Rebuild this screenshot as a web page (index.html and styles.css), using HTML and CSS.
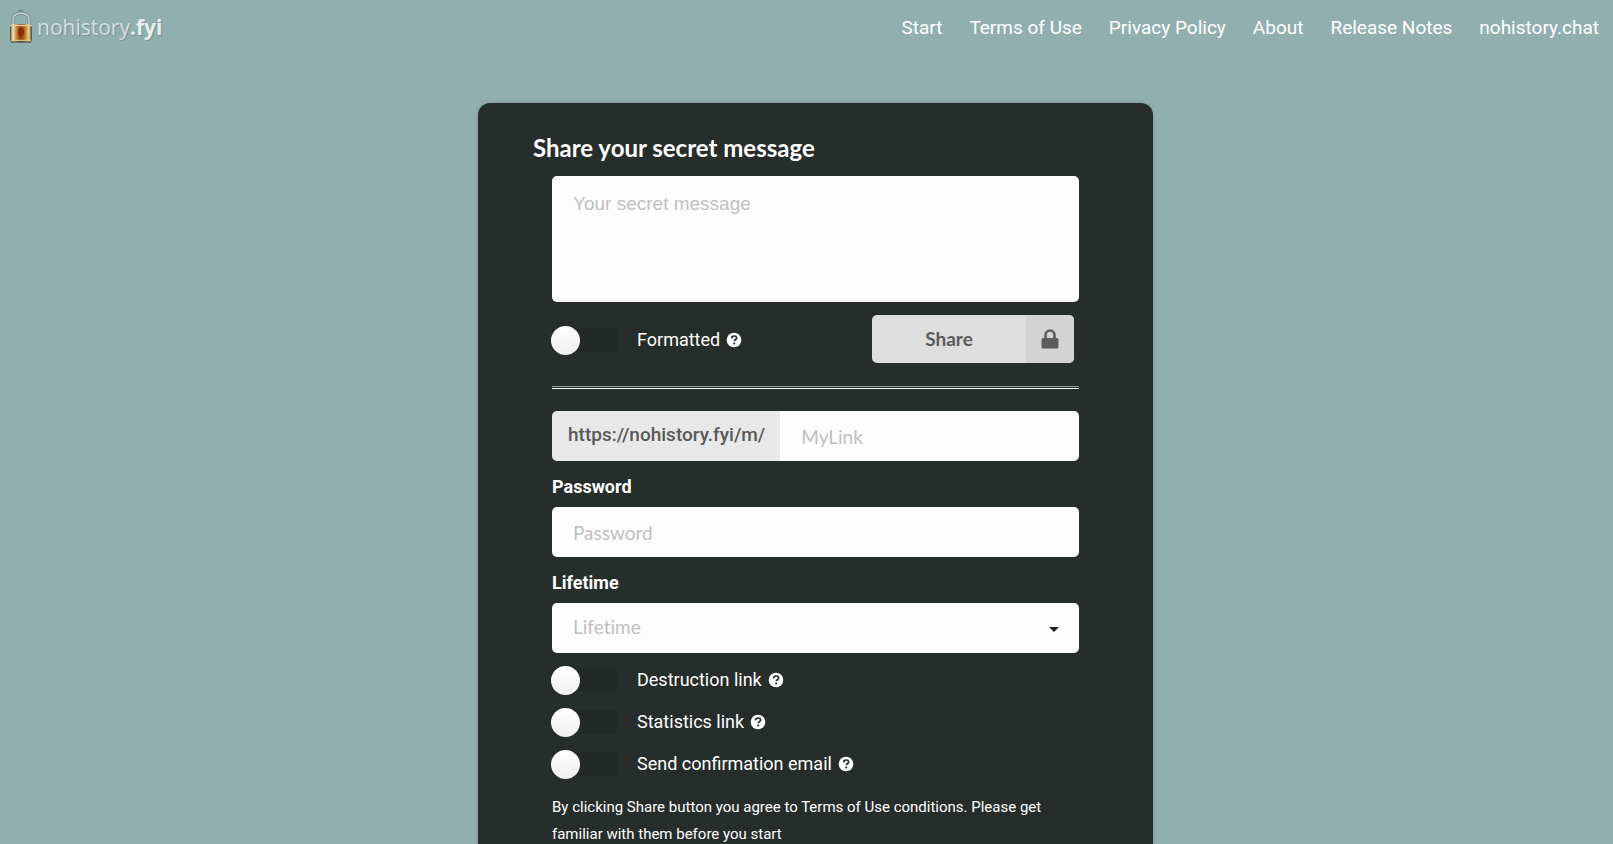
FILE: index.html
```html
<!DOCTYPE html>
<html lang="en">
<head>
<meta charset="utf-8">
<meta name="viewport" content="width=device-width, initial-scale=1">
<title>nohistory.fyi</title>
<link rel="stylesheet" href="styles.css">
</head>
<body>
<svg class="defs" width="0" height="0" aria-hidden="true">
  <symbol id="help" viewBox="0 0 16 16">
    <circle cx="8" cy="8" r="7.3" fill="#fff"/>
    <path d="M5.5 6.3C5.7 4.7 6.7 4 8.1 4c1.500 0 2.500.8 2.500 2.100 0 1.700-2.300 1.700-2.300 3.100" fill="none" stroke="#262d2b" stroke-width="1.700"/>
    <circle cx="8.200" cy="11.500" r="1.100" fill="#262d2b"/>
  </symbol>
</svg>
<header class="topbar">
  <a class="brand" href="#">
    <svg class="brand-icon" viewBox="0 0 26 36" aria-hidden="true">
      <defs>
        <linearGradient id="brass" x1="0" x2="1" y1="0" y2="0">
          <stop offset="0" stop-color="#3e3d22"/>
          <stop offset=".13" stop-color="#f3ecc2"/>
          <stop offset=".28" stop-color="#c58b43"/>
          <stop offset=".48" stop-color="#8d3808"/>
          <stop offset=".66" stop-color="#b06820"/>
          <stop offset=".85" stop-color="#ead590"/>
          <stop offset="1" stop-color="#4f441e"/>
        </linearGradient>
      </defs>
      <path d="M5 16V8C5 5 8 4 13 3c5 1 8 2 8 5v8" fill="none" stroke="#6b8287" stroke-width="3"/>
      <path d="M5 16V8C5 5 8 4 13 3c5 1 8 2 8 5v8" fill="none" stroke="#c8dadb" stroke-width="1.400"/>
      <path d="M10 .8h5" stroke="#6b8285" stroke-width="1.500"/>
      <rect x="2" y="14" width="22" height="18" rx="2" fill="url(#brass)"/>
      <path d="M2 15.500h22" stroke="#d8cfa5" stroke-width="1.500"/>
      <path d="M3 30.500h20" stroke="#d9c583" stroke-width="1.500"/>
      <ellipse cx="13" cy="22" rx="3" ry="4" fill="#8a2a06"/>
      <path d="M3 32h20" stroke="#30373a" stroke-width="1"/>
    </svg>
    <span class="brand-name">nohistory<b>.fyi</b></span>
  </a>
  <nav class="nav">
    <a href="#">Start</a>
    <a href="#">Terms of Use</a>
    <a href="#">Privacy Policy</a>
    <a href="#">About</a>
    <a href="#">Release Notes</a>
    <a href="#">nohistory.chat</a>
  </nav>
</header>
<main class="page">
  <section class="card">
    <h1 class="title">Share your secret message</h1>
    <form class="form">
      <textarea class="box message" placeholder="Your secret message" aria-label="Your secret message"></textarea>
      <div class="actions">
        <div class="toggle">
          <input class="switch" type="checkbox" id="formatted">
          <label for="formatted">Formatted</label>
          <svg class="help"><use href="#help"/></svg>
        </div>
        <button class="share" type="button">
          <span class="share-text">Share</span>
          <span class="share-icon">
            <svg viewBox="0 0 18 20" width="18" height="20" aria-hidden="true">
              <path d="M4.500 10V6a4.500 4.500 0 0 1 9 0v4" fill="none" stroke="#5c5c5c" stroke-width="2.600"/>
              <rect x="0.500" y="9" width="17" height="10.500" rx="1.500" fill="#5c5c5c"/>
            </svg>
          </span>
        </button>
      </div>
      <hr class="divider">
      <div class="link-field">
        <label class="prefix" for="link">https://nohistory.fyi/m/</label>
        <input class="box link" id="link" type="text" placeholder="MyLink">
      </div>
      <label class="label" for="password">Password</label>
      <input class="box" id="password" type="password" placeholder="Password">
      <label class="label" for="lifetime">Lifetime</label>
      <div class="select-wrap">
        <select class="box select" id="lifetime"><option value="">Lifetime</option></select>
        <svg class="caret" viewBox="0 0 10 5" aria-hidden="true"><path d="M0 0h10L5 5z" fill="#222"/></svg>
      </div>
      <div class="options">
        <div class="toggle">
          <input class="switch" type="checkbox" id="destruction">
          <label for="destruction">Destruction link</label>
          <svg class="help"><use href="#help"/></svg>
        </div>
        <div class="toggle">
          <input class="switch" type="checkbox" id="statistics">
          <label for="statistics">Statistics link</label>
          <svg class="help"><use href="#help"/></svg>
        </div>
        <div class="toggle">
          <input class="switch" type="checkbox" id="confirmation">
          <label for="confirmation">Send confirmation email</label>
          <svg class="help"><use href="#help"/></svg>
        </div>
      </div>
      <p class="note">By clicking Share button you agree to Terms of Use conditions. Please get familiar with them before you start</p>
    </form>
  </section>
</main>
</body>
</html>
```

FILE: styles.css
```css
* { box-sizing: border-box; }

body {
  margin: 0;
  background: #91afaf;
  color: #fff;
  font-family: Roboto, "Liberation Sans", sans-serif;
  font-size: 18px;
}

.defs { position: absolute; }

.topbar {
  display: flex;
  justify-content: space-between;
  align-items: center;
  height: 55px;
  padding: 0 14px 0 8px;
}

.brand {
  display: flex;
  align-items: center;
  gap: 3px;
  color: #e3eeee;
  text-decoration: none;
}

.brand-icon { width: 26px; height: 36px; }

.brand-name {
  font-family: "Open Sans", sans-serif;
  font-size: 21px;
  font-weight: 400;
  line-height: 26px;
  padding-bottom: 2px;
  color: #d3e1e2;
  text-shadow: 1px 1px 1px #758e92;
}

.brand-name b { font-weight: 700; color: #e6f0f0; }

.nav { display: flex; gap: 27px; }

.nav a {
  color: #fff;
  font-size: 19px;
  text-decoration: none;
}

.page {
  display: flex;
  justify-content: center;
  padding: 48px 0 0 18px;
}

.card {
  width: 675px;
  max-width: 100%;
  padding: 29px 55px 80px;
  border-radius: 12px;
  background: #262d2b;
  box-shadow: 0 0 4px rgba(38, 45, 43, .2);
}

.title {
  margin: 0 0 13px;
  font: 700 24px/31px Lato, sans-serif;
}

.form { padding: 0 19px; }

.box {
  display: block;
  width: 100%;
  height: 50px;
  padding: 0 21px;
  border: 0;
  border-radius: 5px;
  background: #fdfdfd;
  color: #222;
  font: 400 19px/24px Lato, sans-serif;
  font-variant-ligatures: none;
}

.box::placeholder { color: #bfbfbf; opacity: 1; }

.message {
  height: 126px;
  padding: 16px 21px;
  font-family: "Liberation Sans", sans-serif;
  resize: none;
}

.actions {
  display: flex;
  justify-content: space-between;
  align-items: center;
  padding: 13px 5px 23px 0;
}

.toggle {
  display: flex;
  align-items: center;
  height: 30px;
}

.switch {
  appearance: none;
  display: flex;
  align-items: center;
  width: 65px;
  height: 24px;
  margin: 2px 20px 0 0;
  border-radius: 2px;
  background: #232927;
}

.switch::before {
  content: "";
  width: 29px;
  height: 29px;
  margin-left: -1px;
  flex: none;
  border-radius: 50%;
  background: linear-gradient(#fff, #efefef);
}

.switch:checked::before { margin-left: 37px; }

.help { width: 16px; height: 16px; margin: 2px 0 0 6px; }

.share {
  display: flex;
  width: 202px;
  height: 48px;
  padding: 0;
  overflow: hidden;
  border: 0;
  border-radius: 5px;
  background: #dedede;
  color: #5c5c5c;
  font: 700 19px/24px Lato, sans-serif;
}

.share-text, .share-icon {
  display: flex;
  align-items: center;
  justify-content: center;
  height: 100%;
}

.share-text { flex: 1; }
.share-icon { width: 48px; background: #d3d3d3; }

.divider {
  height: 3px;
  margin: 0 0 22px;
  border: 0;
  border-top: 1px solid #929a97;
  border-bottom: 1px solid #f4f8f6;
}

.link-field { display: flex; }

.prefix {
  flex: none;
  padding: 12px 15px 12px 16px;
  border-radius: 5px 0 0 5px;
  background: #e8e8e8;
  color: #595959;
  font-size: 19px;
  font-weight: 500;
  line-height: 24px;
}

.link { flex: 1; min-width: 0; border-radius: 0 5px 5px 0; }

.label {
  display: block;
  padding: 14px 0 8px;
  font-size: 18px;
  font-weight: 700;
  line-height: 24px;
}

.select-wrap { position: relative; }
.select { appearance: none; padding-bottom: 3px; color: #bfbfbf; }

.caret {
  position: absolute;
  top: 24px;
  right: 20px;
  width: 10px;
  height: 5px;
  pointer-events: none;
}

.options {
  display: grid;
  gap: 12px;
  padding: 11px 0 16px;
}

.note {
  margin: 0;
  font-size: 15px;
  line-height: 27px;
}
```
